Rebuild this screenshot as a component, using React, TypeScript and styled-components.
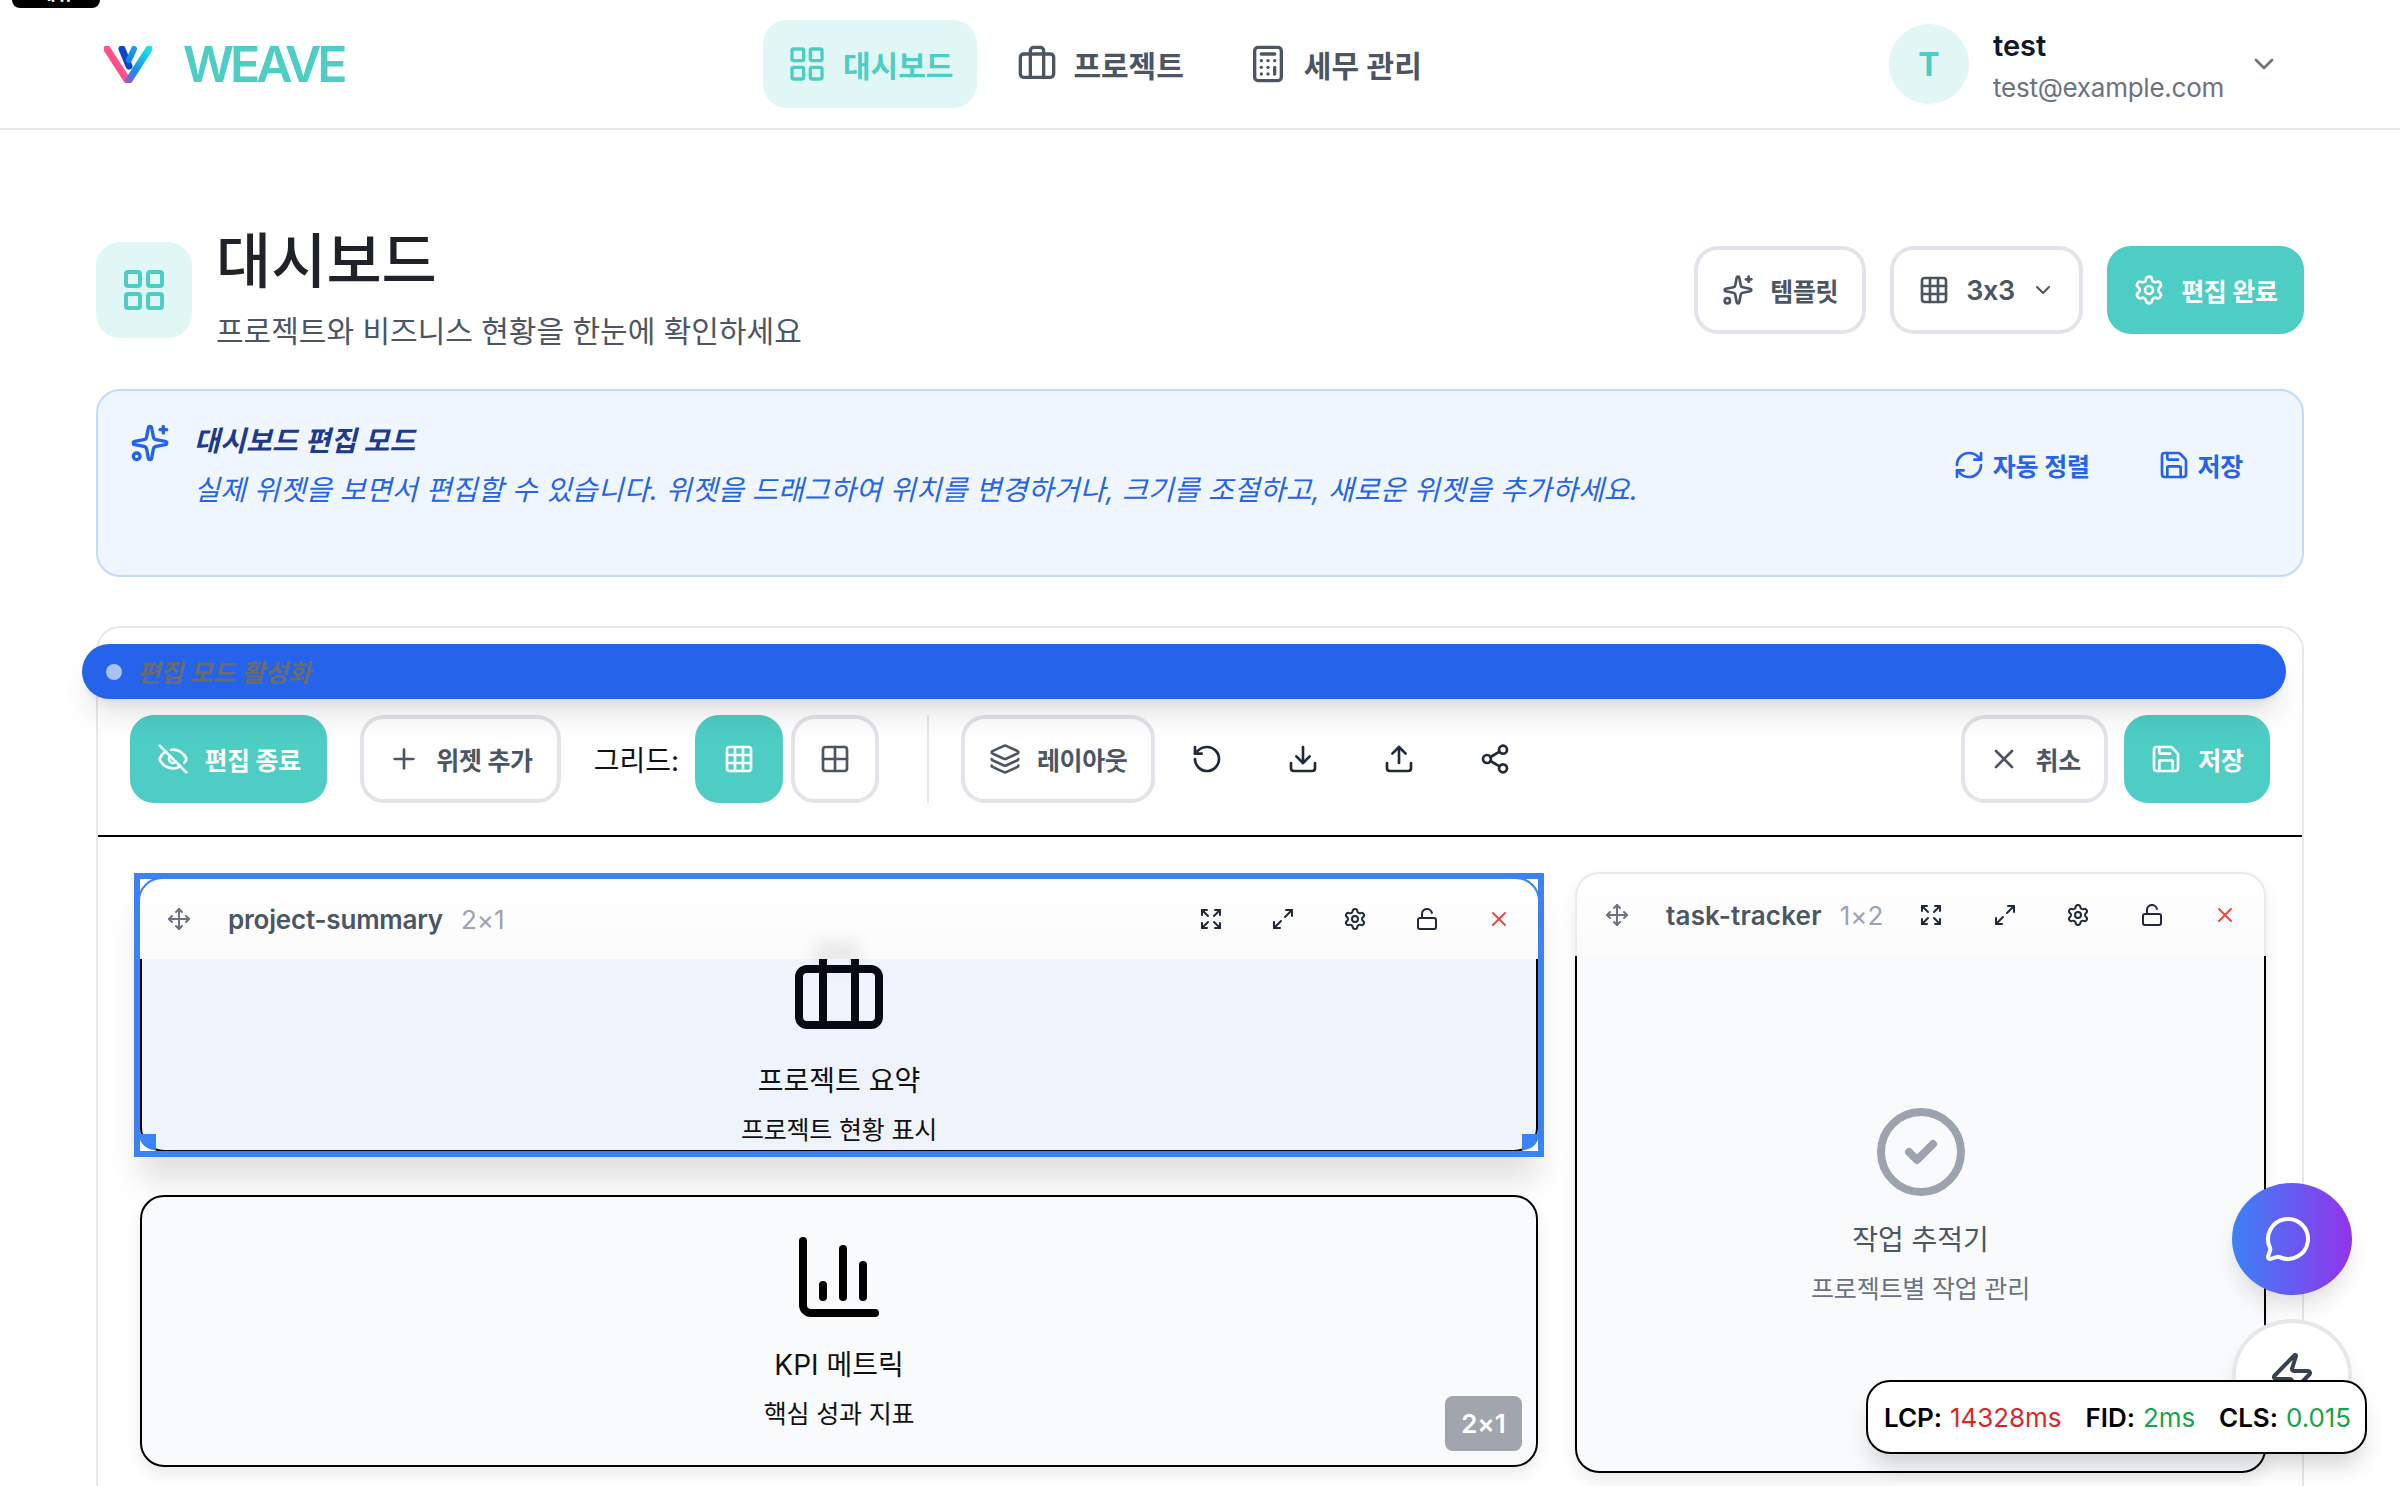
import React from "react";
import styled, { createGlobalStyle } from "styled-components";
import {
  Briefcase,
  Calculator,
  ChartColumn,
  ChevronDown,
  CircleCheck,
  Download,
  Expand,
  EyeOff,
  Grid2x2,
  Grid3x3,
  Layers,
  LayoutGrid,
  LockOpen,
  Maximize2,
  MessageCircle,
  Move,
  Plus,
  RefreshCw,
  RotateCcw,
  Save,
  Settings,
  Share2,
  Sparkles,
  Upload,
  X,
  Zap,
} from "lucide-react";

const teal = "#4ecdc4";
const tealSoft = "#e0f7f5";

const GlobalStyle = createGlobalStyle`
  html, body {
    margin: 0;
    padding: 0;
    background: #ffffff;
  }
  * {
    box-sizing: border-box;
  }
  body {
    font-family: Inter, "Noto Sans CJK KR", sans-serif;
    font-feature-settings: "calt" 0;
    color: #111827;
  }
`;

const Page = styled.div`
  position: relative;
  width: 2400px;
  height: 1486px;
  overflow: hidden;
  background: #fff;
`;

const SkipTab = styled.div`
  position: absolute;
  top: -22px;
  left: 12px;
  width: 88px;
  height: 30px;
  border-radius: 8px;
  background: #000;
  color: #fff;
  font-size: 20px;
  line-height: 30px;
  font-weight: 600;
  text-align: center;
`;

const Header = styled.header`
  display: flex;
  align-items: center;
  height: 130px;
  padding-left: 104px;
  border-bottom: 2px solid #e5e7eb;
`;

const Brand = styled.div`
  display: flex;
  align-items: center;
  gap: 31px;
  width: 239px;
  svg {
    flex: none;
  }
`;

const BrandName = styled.span`
  font-size: 50px;
  font-weight: 600;
  letter-spacing: -4px;
  color: ${teal};
`;

const Nav = styled.nav`
  display: flex;
  align-items: center;
  gap: 16px;
  margin-left: 420px;
`;

const NavItem = styled.a<{ $active?: boolean }>`
  display: flex;
  align-items: center;
  gap: 16px;
  height: 88px;
  padding: 0 24px;
  border-radius: 24px;
  font-size: 30px;
  font-weight: 600;
  color: ${(p) => (p.$active ? teal : "#4b5563")};
  background: ${(p) => (p.$active ? tealSoft : "transparent")};
`;

const UserBox = styled.div`
  display: flex;
  align-items: center;
  margin-left: auto;
  margin-right: 120px;
`;

const Avatar = styled.div`
  display: flex;
  align-items: center;
  justify-content: center;
  width: 80px;
  height: 80px;
  border-radius: 50%;
  background: ${tealSoft};
  color: ${teal};
  font-size: 32px;
  font-weight: 700;
`;

const UserText = styled.div`
  display: flex;
  flex-direction: column;
  gap: 6px;
  margin: 5px 24px 0;
`;

const UserName = styled.span`
  font-size: 29px;
  line-height: 36px;
  font-weight: 600;
  color: #111827;
`;

const UserMail = styled.span`
  font-size: 26px;
  line-height: 36px;
  letter-spacing: -0.25px;
  color: #6b7280;
`;

const Main = styled.main`
  padding: 112px 96px 0;
`;

const TitleRow = styled.div`
  display: flex;
  align-items: center;
  justify-content: space-between;
  height: 96px;
`;

const TitleLeft = styled.div`
  display: flex;
  align-items: center;
  gap: 24px;
`;

const TitleIcon = styled.div`
  display: flex;
  align-items: center;
  justify-content: center;
  width: 96px;
  height: 96px;
  border-radius: 24px;
  background: ${tealSoft};
  color: ${teal};
`;

const TitleText = styled.div`
  display: flex;
  flex-direction: column;
  align-self: flex-start;
  margin-top: -2px;
`;

const PageTitle = styled.h1`
  margin: 0;
  font-size: 60px;
  line-height: 72px;
  font-weight: 500;
  color: #1f2329;
`;

const PageSub = styled.p`
  margin: 12px 0 0;
  font-size: 30px;
  line-height: 44px;
  color: #4b5563;
`;

const TitleActions = styled.div`
  display: flex;
  align-items: center;
  gap: 24px;
`;

const Btn = styled.button<{ $primary?: boolean; $square?: boolean; $ml?: number; $px?: number }>`
  display: flex;
  align-items: center;
  justify-content: center;
  gap: 16px;
  height: 88px;
  width: ${(p) => (p.$square ? "88px" : "auto")};
  margin-left: ${(p) => p.$ml ?? 0}px;
  padding: ${(p) => (p.$square ? "0" : `0 ${p.$px ?? 24}px`)};
  border: 4px solid ${(p) => (p.$primary ? teal : "#e1e4ea")};
  border-radius: 24px;
  background: ${(p) => (p.$primary ? teal : "#fff")};
  color: ${(p) => (p.$primary ? "#fff" : "#4b5563")};
  font-family: inherit;
  font-feature-settings: "calt" 0;
  font-size: 25px;
  letter-spacing: -0.4px;
  font-weight: 600;
  white-space: nowrap;
`;

const GridCount = styled.span`
  font-size: 27px;
`;

const Banner = styled.section`
  display: flex;
  justify-content: space-between;
  height: 188px;
  margin-top: 51px;
  padding: 32px;
  border: 2px solid #bfdbfe;
  border-radius: 24px;
  background: #eff6ff;
  color: #2563eb;
`;

const BannerLeft = styled.div`
  display: flex;
  gap: 24px;
`;

const BannerText = styled.div`
  display: flex;
  flex-direction: column;
  gap: 7px;
  margin-top: -2px;
  font-style: italic;
  letter-spacing: 0.2px;
`;

const BannerTitle = styled.div`
  font-size: 28px;
  line-height: 40px;
  font-weight: 700;
  color: #1e3a8a;
`;

const BannerBody = styled.div`
  font-size: 28px;
  line-height: 44px;
  color: #2563eb;
`;

const BannerActions = styled.div`
  display: flex;
  align-items: flex-start;
  gap: 44px;
  margin-top: 22px;
  margin-right: 15px;
`;

const LinkBtn = styled.a`
  display: flex;
  align-items: center;
  gap: 8px;
  padding: 0 12px;
  height: 40px;
  font-size: 25px;
  letter-spacing: -0.3px;
  font-weight: 600;
`;

const Panel = styled.section`
  position: relative;
  height: 900px;
  margin-top: 49px;
  border: 2px solid #e5e7eb;
  border-radius: 24px;
`;

const EditBar = styled.div`
  position: absolute;
  top: 16px;
  left: -16px;
  right: 16px;
  display: flex;
  align-items: center;
  gap: 15px;
  height: 55px;
  padding-left: 24px;
  border-radius: 28px;
  background: #2563eb;
  box-shadow: 0 20px 30px -6px rgba(0, 0, 0, 0.12), 0 8px 12px -6px rgba(0, 0, 0, 0.08);
`;

const EditDot = styled.span`
  width: 16px;
  height: 16px;
  border-radius: 50%;
  background: #a8c1f7;
`;

const EditLabel = styled.span`
  margin-top: -2px;
  font-size: 25px;
  font-style: italic;
  font-weight: 600;
  color: #6b6b6b;
`;

const Toolbar = styled.div`
  display: flex;
  align-items: center;
  height: 209px;
  padding: 87px 32px 32px;
  border-bottom: 2px solid #000;
`;

const GridLabel = styled.span`
  margin: 0 16px 0 33px;
  font-size: 28px;
  color: #111;
`;

const Divider = styled.span`
  width: 2px;
  height: 88px;
  margin: 0 32px 0 48px;
  background: #e5e7eb;
`;

const GhostIcon = styled.span`
  display: flex;
  align-items: center;
  justify-content: center;
  width: 88px;
  height: 88px;
  margin-left: 8px;
  color: #1f2937;
`;

const Spacer = styled.span`
  flex: 1;
`;

const WidgetGrid = styled.div`
  display: grid;
  grid-template-columns: 1398px 691px;
  grid-template-rows: 272px 272px;
  column-gap: 37px;
  row-gap: 44px;
  padding: 42px 0 0 42px;
`;

const Widget = styled.article<{ $selected?: boolean; $tall?: boolean }>`
  position: relative;
  display: flex;
  flex-direction: column;
  grid-column: ${(p) => (p.$tall ? 2 : 1)};
  grid-row: ${(p) => (p.$tall ? "1 / span 2" : "auto")};
  margin: ${(p) => (p.$tall ? "-7px 0 -6px" : "0")};
  border-radius: 24px;
  box-shadow: ${(p) => (p.$selected ? "none" : "0 8px 16px rgba(0, 0, 0, 0.08)")};

  ${(p) =>
    p.$selected
      ? `&::before {
    content: "";
    position: absolute;
    inset: -6px;
    border: 6px solid #3b82f6;
    box-shadow: 0 30px 30px -6px rgba(0, 0, 0, 0.12);
    pointer-events: none;
  }`
      : ""}
`;

const WidgetHeader = styled.div<{ $gap: number; $height: number; $ring?: boolean; $border?: boolean }>`
  position: relative;
  z-index: 1;
  display: flex;
  align-items: center;
  flex: none;
  height: ${(p) => p.$height}px;
  margin: ${(p) => (p.$ring ? "-2px -2px 0" : "0")};
  padding: ${(p) => (p.$ring ? "0 27px" : "0 27px 0 28px")};
  border-radius: 24px 24px 0 0;
  border: ${(p) => (p.$ring ? "2px solid #3b82f6" : p.$border ? "2px solid #e9eaee" : "none")};
  border-bottom: none;
  background: linear-gradient(#fff, #fbfbfb);
  --icon-gap: ${(p) => p.$gap}px;
`;

const HeaderSmudge = styled.span`
  position: absolute;
  left: 50%;
  bottom: -6px;
  width: 24px;
  height: 6px;
  margin-left: -14px;
  box-shadow: 0 -8px 16px 10px rgba(0, 0, 0, 0.08);
`;

const WidgetName = styled.span<{ $wide?: boolean }>`
  margin-left: 37px;
  font-size: 26px;
  letter-spacing: ${(p) => (p.$wide ? "0.2px" : "-0.2px")};
  font-weight: 600;
  white-space: nowrap;
  color: #4b5563;
`;

const WidgetSize = styled.span`
  margin-left: 18px;
  font-size: 26px;
  white-space: nowrap;
  color: #9ca3af;
`;

const WidgetTools = styled.div`
  display: flex;
  align-items: center;
  gap: var(--icon-gap);
  margin-left: auto;
  color: #1f2937;
`;

const WidgetBody = styled.div<{ $selected?: boolean; $muted?: boolean; $full?: boolean; $raise?: number }>`
  display: flex;
  flex: 1;
  flex-direction: column;
  align-items: center;
  justify-content: ${(p) => (p.$selected ? "flex-start" : "center")};
  padding-bottom: ${(p) => p.$raise ?? 0}px;
  border: 2px solid #000;
  border-top: ${(p) => (p.$full ? "2px solid #000" : "none")};
  border-radius: ${(p) => (p.$full ? "24px" : "0 0 24px 24px")};
  background: ${(p) => (p.$selected ? "#eff3fb" : "#f9fafb")};
  color: ${(p) => (p.$selected ? "#060a14" : p.$muted ? "#9ca3af" : "#000")};
`;

const BodyIcon = styled.span<{ $lift?: number }>`
  display: flex;
  margin-top: ${(p) => -(p.$lift ?? 0)}px;
  margin-bottom: 16px;
`;

const BodyTitle = styled.div<{ $muted?: boolean }>`
  font-size: 28px;
  line-height: 48px;
  color: ${(p) => (p.$muted ? "#4b5563" : "#111")};
`;

const BodySub = styled.div<{ $muted?: boolean }>`
  margin-top: 5px;
  font-size: 25px;
  letter-spacing: -0.2px;
  line-height: 40px;
  color: ${(p) => (p.$muted ? "#6b7280" : "#111")};
`;

const SizeBadge = styled.span`
  position: absolute;
  right: 16px;
  bottom: 16px;
  display: flex;
  align-items: center;
  justify-content: center;
  width: 77px;
  height: 55px;
  border-radius: 8px;
  background: #a1a5ad;
  color: #fff;
  font-size: 26px;
  font-weight: 600;
`;

const ResizeCorner = styled.span<{ $side: "left" | "right" }>`
  position: absolute;
  z-index: 1;
  bottom: 1px;
  ${(p) => p.$side}: -1px;
  width: 17px;
  height: 16px;
  background: #3b82f6;
  border-bottom-${(p) => p.$side}-radius: 16px;
`;

const Fab = styled.div<{ $top: number; $light?: boolean }>`
  position: absolute;
  top: ${(p) => p.$top}px;
  right: 48px;
  display: flex;
  align-items: center;
  justify-content: center;
  width: 120px;
  height: 112px;
  padding-right: ${(p) => (p.$light ? 0 : 8)}px;
  border-radius: 50%;
  border: ${(p) => (p.$light ? "4px solid #e5e7eb" : "none")};
  background: ${(p) => (p.$light ? "#fff" : "linear-gradient(90deg, #3b82f6, #9333ea)")};
  color: ${(p) => (p.$light ? "#374151" : "#fff")};
  box-shadow: 0 16px 24px -6px rgba(0, 0, 0, 0.14);
`;

const Metrics = styled.div`
  position: absolute;
  top: 1380px;
  left: 1866px;
  display: flex;
  align-items: center;
  gap: 24px;
  width: 501px;
  height: 74px;
  padding: 0 16px;
  border: 2px solid #000;
  border-radius: 24px;
  background: #fff;
  box-shadow: 0 16px 24px -6px rgba(0, 0, 0, 0.18);
  font-size: 26px;
  letter-spacing: -0.05px;
`;

const Metric = styled.span`
  display: flex;
  gap: 8px;
  b {
    font-weight: 600;
    color: #000;
  }
`;

const MetricValue = styled.span<{ $bad?: boolean }>`
  color: ${(p) => (p.$bad ? "#dc2626" : "#16a34a")};
`;

function Logo() {
  return (
    <svg width="48" height="37" viewBox="0 0 48 37" fill="none" strokeLinecap="round">
      <defs>
        <linearGradient id="lg-right" x1="45" y1="2" x2="24" y2="35" gradientUnits="userSpaceOnUse">
          <stop offset="0" stopColor="#17e8e4" />
          <stop offset="0.7" stopColor="#1a8ae8" />
          <stop offset="1" stopColor="#8a5ad8" />
        </linearGradient>
        <linearGradient id="lg-mid" x1="30" y1="2" x2="20" y2="20" gradientUnits="userSpaceOnUse">
          <stop offset="0" stopColor="#12a0ea" />
          <stop offset="1" stopColor="#1a78e0" />
        </linearGradient>
      </defs>
      <path d="M18 3 L25 20" stroke="#0b46c8" strokeWidth="7" />
      <path d="M3 3 L23 34" stroke="#ff4f8f" strokeWidth="7" />
      <path d="M30 3 L25 14" stroke="url(#lg-mid)" strokeWidth="6" />
      <path d="M45 3 L25 34" stroke="url(#lg-right)" strokeWidth="7" />
    </svg>
  );
}

function WidgetToolIcons() {
  return (
    <WidgetTools>
      <Expand size={24} />
      <Maximize2 size={24} />
      <Settings size={24} />
      <LockOpen size={24} />
      <X size={24} color="#ef4444" />
    </WidgetTools>
  );
}

export default function App() {
  return (
    <Page>
      <GlobalStyle />
      <SkipTab>메뉴</SkipTab>
      <Header>
        <Brand>
          <Logo />
          <BrandName>WEAVE</BrandName>
        </Brand>
        <Nav>
          <NavItem $active>
            <LayoutGrid size={40} />
            대시보드
          </NavItem>
          <NavItem>
            <Briefcase size={40} />
            프로젝트
          </NavItem>
          <NavItem>
            <Calculator size={40} />
            세무 관리
          </NavItem>
        </Nav>
        <UserBox>
          <Avatar>T</Avatar>
          <UserText>
            <UserName>test</UserName>
            <UserMail>test@example.com</UserMail>
          </UserText>
          <ChevronDown size={32} color="#6b7280" />
        </UserBox>
      </Header>

      <Main>
        <TitleRow>
          <TitleLeft>
            <TitleIcon>
              <LayoutGrid size={48} />
            </TitleIcon>
            <TitleText>
              <PageTitle>대시보드</PageTitle>
              <PageSub>프로젝트와 비즈니스 현황을 한눈에 확인하세요</PageSub>
            </TitleText>
          </TitleLeft>
          <TitleActions>
            <Btn>
              <Sparkles size={32} />
              템플릿
            </Btn>
            <Btn>
              <Grid3x3 size={32} />
              <GridCount>3x3</GridCount>
              <ChevronDown size={24} />
            </Btn>
            <Btn $primary $px={22.5}>
              <Settings size={32} />
              편집 완료
            </Btn>
          </TitleActions>
        </TitleRow>

        <Banner>
          <BannerLeft>
            <Sparkles size={40} />
            <BannerText>
              <BannerTitle>대시보드 편집 모드</BannerTitle>
              <BannerBody>
                실제 위젯을 보면서 편집할 수 있습니다. 위젯을 드래그하여 위치를 변경하거나, 크기를 조절하고, 새로운 위젯을 추가하세요.
              </BannerBody>
            </BannerText>
          </BannerLeft>
          <BannerActions>
            <LinkBtn>
              <RefreshCw size={32} />
              자동 정렬
            </LinkBtn>
            <LinkBtn>
              <Save size={32} />
              저장
            </LinkBtn>
          </BannerActions>
        </Banner>

        <Panel>
          <EditBar>
            <EditDot />
            <EditLabel>편집 모드 활성화</EditLabel>
          </EditBar>
          <Toolbar>
            <Btn $primary $px={22.5}>
              <EyeOff size={32} />
              편집 종료
            </Btn>
            <Btn $ml={33}>
              <Plus size={32} />
              위젯 추가
            </Btn>
            <GridLabel>그리드:</GridLabel>
            <Btn $primary $square>
              <Grid3x3 size={32} />
            </Btn>
            <Btn $square $ml={8}>
              <Grid2x2 size={32} />
            </Btn>
            <Divider />
            <Btn>
              <Layers size={32} />
              레이아웃
            </Btn>
            <GhostIcon>
              <RotateCcw size={32} />
            </GhostIcon>
            <GhostIcon>
              <Download size={32} />
            </GhostIcon>
            <GhostIcon>
              <Upload size={32} />
            </GhostIcon>
            <GhostIcon>
              <Share2 size={32} />
            </GhostIcon>
            <Spacer />
            <Btn $px={23}>
              <X size={32} />
              취소
            </Btn>
            <Btn $primary $ml={16} $px={22.5}>
              <Save size={32} />
              저장
            </Btn>
          </Toolbar>

          <WidgetGrid>
            <Widget $selected>
              <WidgetHeader $gap={48} $height={82} $ring>
                <Move size={24} color="#6b7280" />
                <WidgetName>project-summary</WidgetName>
                <WidgetSize>2×1</WidgetSize>
                <WidgetToolIcons />
                <HeaderSmudge />
              </WidgetHeader>
              <WidgetBody $selected>
                <BodyIcon $lift={14}>
                  <Briefcase size={96} />
                </BodyIcon>
                <BodyTitle>프로젝트 요약</BodyTitle>
                <BodySub>프로젝트 현황 표시</BodySub>
              </WidgetBody>
              <ResizeCorner $side="left" />
              <ResizeCorner $side="right" />
            </Widget>

            <Widget $tall>
              <WidgetHeader $gap={49.5} $height={84} $border>
                <Move size={24} color="#6b7280" />
                <WidgetName $wide>task-tracker</WidgetName>
                <WidgetSize>1×2</WidgetSize>
                <WidgetToolIcons />
              </WidgetHeader>
              <WidgetBody $muted $raise={14}>
                <BodyIcon>
                  <CircleCheck size={96} />
                </BodyIcon>
                <BodyTitle $muted>작업 추적기</BodyTitle>
                <BodySub $muted>프로젝트별 작업 관리</BodySub>
              </WidgetBody>
            </Widget>

            <Widget>
              <WidgetBody $full>
                <BodyIcon>
                  <ChartColumn size={96} />
                </BodyIcon>
                <BodyTitle>KPI 메트릭</BodyTitle>
                <BodySub>핵심 성과 지표</BodySub>
              </WidgetBody>
              <SizeBadge>2×1</SizeBadge>
            </Widget>
          </WidgetGrid>
        </Panel>
      </Main>

      <Fab $top={1183}>
        <MessageCircle size={48} />
      </Fab>
      <Fab $top={1319} $light>
        <Zap size={48} />
      </Fab>
      <Metrics>
        <Metric>
          <b>LCP:</b>
          <MetricValue $bad>14328ms</MetricValue>
        </Metric>
        <Metric>
          <b>FID:</b>
          <MetricValue>2ms</MetricValue>
        </Metric>
        <Metric>
          <b>CLS:</b>
          <MetricValue>0.015</MetricValue>
        </Metric>
      </Metrics>
    </Page>
  );
}
